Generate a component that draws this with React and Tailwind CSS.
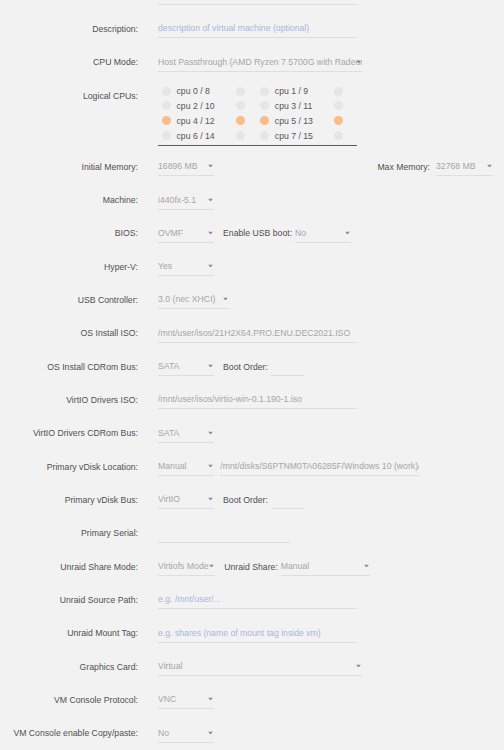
import React from 'react';

const Arrow = () => (
  <svg width="5" height="3" viewBox="0 0 5 3" className="absolute right-[1px] top-1/2 -translate-y-1/2">
    <path d="M0 0h5L2.5 3z" fill="#8a8a8a" />
  </svg>
);

function Label({ children }) {
  return <div className="w-[138px] shrink-0 text-right text-[#505050] whitespace-nowrap">{children}</div>;
}

function TextBox({ w, value, placeholder }) {
  return (
    <div className={`${w} relative flex h-[19px] items-center overflow-hidden whitespace-nowrap border-b border-[#dedede]`}>
      {value ? (
        <span className="text-[#a6a6a6]">{value}</span>
      ) : (
        <span className="text-[#a9b5dc]">{placeholder}</span>
      )}
    </div>
  );
}

function Select({ w, value }) {
  return (
    <div className={`${w} relative flex h-[19px] items-center whitespace-nowrap border-b border-[#dedede]`}>
      <span className="block overflow-hidden pr-[6px] text-[#a6a6a6]">{value}</span>
      <Arrow />
    </div>
  );
}

function InlineLabel({ children, ml = 'ml-[9px]' }) {
  return <span className={`${ml} mr-[3px] whitespace-nowrap text-[#505050]`}>{children}</span>;
}

function Row({ label, children }) {
  return (
    <div className="flex h-[33.33px] shrink-0 items-center">
      <Label>{label}</Label>
      <div className="ml-[20px] flex flex-1 items-center">{children}</div>
    </div>
  );
}

const cpus = [
  ['cpu 0 / 8', false, 'cpu 1 / 9', false],
  ['cpu 2 / 10', false, 'cpu 3 / 11', false],
  ['cpu 4 / 12', true, 'cpu 5 / 13', true],
  ['cpu 6 / 14', false, 'cpu 7 / 15', false],
];

function Dot({ on }) {
  return <span className={`block h-[9px] w-[9px] shrink-0 rounded-full ${on ? 'bg-[#f9bd8a]' : 'bg-[#e6e6e6]'}`} />;
}

function CpuCell({ name, on }) {
  return (
    <div className="flex h-[14.8px] items-center pl-[4px]">
      <Dot on={on} />
      <span className="ml-[5.5px] w-[59.5px] text-[#555]">{name}</span>
      <Dot on={on} />
    </div>
  );
}

export default function App() {
  return (
    <div className="flex h-[750px] w-full flex-col overflow-hidden bg-[#f2f2f2] font-['Liberation_Sans',Arial,sans-serif] text-[8.7px] leading-[10px]">
      <div className="-mt-[21.2px] flex flex-col">
        <Row label="Name:">
          <TextBox w="w-[199px]" value="Windows 10 (work)" />
        </Row>
        <Row label="Description:">
          <TextBox w="w-[199px]" placeholder="description of virtual machine (optional)" />
        </Row>
        <Row label="CPU Mode:">
          <Select w="w-[204px]" value="Host Passthrough (AMD Ryzen 7 5700G with Radeon Graphics)" />
        </Row>

        {/* Logical CPUs */}
        <div className="flex h-[71.23px] shrink-0">
          <div className="pt-[12px]">
            <Label>Logical CPUs:</Label>
          </div>
          <div className="ml-[20px] w-[199px] self-start border-b border-[#5a5a5a] pb-[2.5px] pt-[5px]">
            {cpus.map((r) => (
              <div key={r[0]} className="grid grid-cols-[98.3px_98.3px]">
                <CpuCell name={r[0]} on={r[1]} />
                <CpuCell name={r[2]} on={r[3]} />
              </div>
            ))}
          </div>
        </div>

        <Row label="Initial Memory:">
          <Select w="w-[56px]" value="16896 MB" />
          <div className="ml-auto mr-[11px] flex items-center">
            <span className="mr-[6px] text-[#505050]">Max Memory:</span>
            <Select w="w-[57px]" value="32768 MB" />
          </div>
        </Row>
        <Row label="Machine:">
          <Select w="w-[56px]" value="i440fx-5.1" />
        </Row>
        <Row label="BIOS:">
          <Select w="w-[56px]" value="OVMF" />
          <InlineLabel>Enable USB boot:</InlineLabel>
          <Select w="w-[56px]" value="No" />
        </Row>
        <Row label="Hyper-V:">
          <Select w="w-[56px]" value="Yes" />
        </Row>
        <Row label="USB Controller:">
          <Select w="w-[71px]" value="3.0 (nec XHCI)" />
        </Row>
        <Row label="OS Install ISO:">
          <TextBox w="w-[199px]" value="/mnt/user/isos/21H2X64.PRO.ENU.DEC2021.ISO" />
        </Row>
        <Row label="OS Install CDRom Bus:">
          <Select w="w-[56px]" value="SATA" />
          <InlineLabel>Boot Order:</InlineLabel>
          <TextBox w="w-[33px]" />
        </Row>
        <Row label="VirtIO Drivers ISO:">
          <TextBox w="w-[199px]" value="/mnt/user/isos/virtio-win-0.1.190-1.iso" />
        </Row>
        <Row label="VirtIO Drivers CDRom Bus:">
          <Select w="w-[56px]" value="SATA" />
        </Row>
        <Row label="Primary vDisk Location:">
          <Select w="w-[56px]" value="Manual" />
          <div className="ml-[6.3px]">
            <TextBox w="w-[199px]" value="/mnt/disks/S6PTNM0TA06285F/Windows 10 (work)/vdisk1.img" />
          </div>
        </Row>
        <Row label="Primary vDisk Bus:">
          <Select w="w-[56px]" value="VirtIO" />
          <InlineLabel>Boot Order:</InlineLabel>
          <TextBox w="w-[33px]" />
        </Row>
        <Row label="Primary Serial:">
          <TextBox w="w-[132px]" />
        </Row>
        <Row label="Unraid Share Mode:">
          <Select w="w-[56.5px]" value="Virtiofs Mode" />
          <InlineLabel ml="ml-[9.7px]">Unraid Share:</InlineLabel>
          <Select w="w-[89.5px]" value="Manual" />
        </Row>
        <Row label="Unraid Source Path:">
          <TextBox w="w-[199px]" placeholder="e.g. /mnt/user/..." />
        </Row>
        <Row label="Unraid Mount Tag:">
          <TextBox w="w-[199px]" placeholder="e.g. shares (name of mount tag inside vm)" />
        </Row>
        <Row label="Graphics Card:">
          <Select w="w-[204px]" value="Virtual" />
        </Row>
        <Row label="VM Console Protocol:">
          <Select w="w-[56px]" value="VNC" />
        </Row>
        <Row label="VM Console enable Copy/paste:">
          <Select w="w-[56px]" value="No" />
        </Row>
      </div>
    </div>
  );
}
